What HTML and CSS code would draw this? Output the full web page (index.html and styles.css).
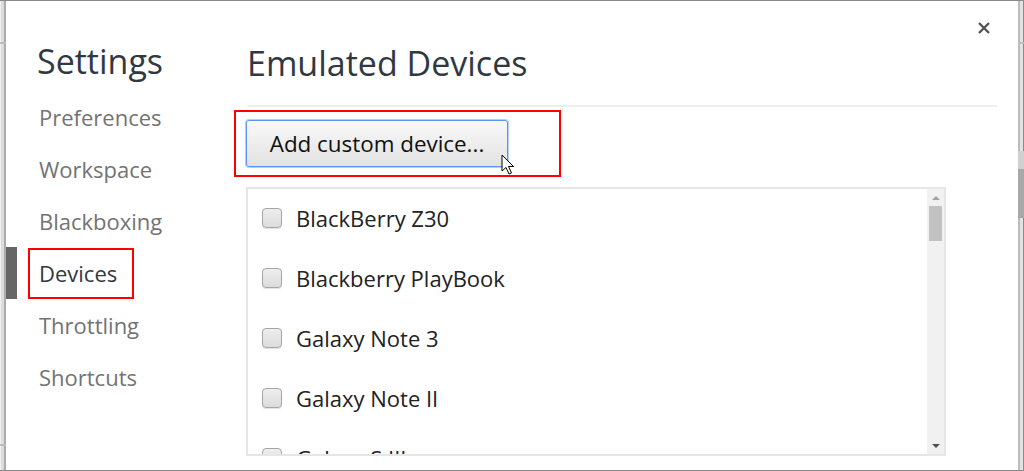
FILE: index.html
```html
<!DOCTYPE html>
<html lang="en">
<head>
    <meta charset="UTF-8">
    <title>Settings - Emulated Devices</title>
    <link rel="stylesheet" href="styles.css">
</head>
<body>
    <div class="frame">
        <div class="edge-left"></div>

        <div class="dialog">
            <!-- Close button -->
            <button class="close-btn" title="Close">
                <svg width="14" height="14" viewBox="0 0 14 14">
                    <path d="M2 2 L12 12 M12 2 L2 12" stroke="#555" stroke-width="2.4" fill="none"/>
                </svg>
            </button>

            <!-- Sidebar -->
            <div class="sidebar">
                <h1 class="sidebar-title">Settings</h1>
                <ul class="nav">
                    <li class="nav-item">Preferences</li>
                    <li class="nav-item">Workspace</li>
                    <li class="nav-item">Blackboxing</li>
                    <li class="nav-item selected"><span class="mark">Devices</span></li>
                    <li class="nav-item">Throttling</li>
                    <li class="nav-item">Shortcuts</li>
                </ul>
            </div>

            <!-- Main panel -->
            <div class="panel">
                <h2 class="panel-title">Emulated Devices</h2>

                <div class="mark-box">
                    <button class="add-btn">Add custom device...</button>
                    <svg class="cursor" width="14" height="22" viewBox="0 0 14 22">
                        <path d="M1 1 L1 17 L5 13.5 L8 20 L10.5 19 L7.5 12.5 L12.5 12.5 Z" fill="#fff" stroke="#000" stroke-width="1"/>
                    </svg>
                </div>

                <div class="device-list">
                    <div class="devices">
                        <label class="device"><span class="check"></span>BlackBerry Z30</label>
                        <label class="device"><span class="check"></span>Blackberry PlayBook</label>
                        <label class="device"><span class="check"></span>Galaxy Note 3</label>
                        <label class="device"><span class="check"></span>Galaxy Note II</label>
                        <label class="device"><span class="check"></span>Galaxy S III</label>
                    </div>
                    <div class="scrollbar">
                        <div class="arrow arrow-up"></div>
                        <div class="track"><div class="thumb"></div></div>
                        <div class="arrow arrow-down"></div>
                    </div>
                </div>
            </div>
        </div>

        <div class="edge-right"></div>
    </div>
</body>
</html>
```

FILE: styles.css
```css
/* General */
body {
    margin: 0;
    font-family: 'Open Sans', 'Noto Sans', sans-serif;
    background: #fff;
    overflow: hidden;
}

.frame {
    display: flex;
    width: 1024px;
    height: 471px;
    box-sizing: border-box;
    border-top: 1px solid #8a8a8a;
    border-bottom: 1px solid #8a8a8a;
}

/* Window edges */
.edge-left {
    width: 6px;
    background: linear-gradient(to bottom, transparent 41px, #bdbdbd 41px 43px, transparent 43px 443px, #bdbdbd 443px 445px, transparent 445px),
        linear-gradient(to right, #f2f2f2 1px, #dcdcdc 1px 4px, #ababab 4px 6px);
}

.edge-right {
    width: 6px;
    background: linear-gradient(to bottom, transparent 41px, #bdbdbd 41px 43px, transparent 43px 150px, #d0d0d0 150px 168px, #a8a8a8 168px 217px, transparent 217px),
        linear-gradient(to right, #bcbcbc 2px, #e2e2e2 2px 5px, #8a8a8a 5px);
}

.dialog {
    flex: 1;
    display: flex;
    position: relative;
    background: #fff;
}

.close-btn {
    position: absolute;
    top: 20px;
    right: 27px;
    width: 14px;
    height: 14px;
    padding: 0;
    border: none;
    background: none;
    cursor: pointer;
}
.close-btn svg { display: block; }

/* Sidebar */
.sidebar {
    width: 241px;
    padding-top: 40px;
}

.sidebar-title {
    margin: 0 0 10px 31px;
    font-size: 34px;
    font-weight: 400;
    line-height: 40px;
    color: #303942;
}

.nav {
    list-style: none;
    margin: 0;
    padding: 0;
}

.nav-item {
    height: 52px;
    line-height: 52px;
    padding-left: 33px;
    font-size: 22px;
    color: #737373;
}

.nav-item.selected {
    border-left: 11px solid #666;
    padding-left: 22px;
    color: #303942;
}

.mark {
    display: inline-block;
    line-height: 47px;
    margin-left: -11px;
    padding: 0 15px 0 9px;
    border: 2px solid #f00;
}

/* Main panel */
.panel {
    flex: 1;
    padding-top: 42px;
    padding-right: 21px;
}

.panel-title {
    margin: 0;
    padding-bottom: 22px;
    border-bottom: 2px solid #eee;
    font-size: 34px;
    font-weight: 400;
    line-height: 40px;
    color: #303942;
}

.mark-box {
    position: relative;
    width: 303px;
    margin: 3px 0 0 -13px;
    padding: 8px 10px;
    border: 2px solid #f00;
}

.add-btn {
    display: block;
    width: 262px;
    height: 47px;
    padding: 0;
    font-family: inherit;
    font-size: 22.4px;
    color: #111;
    background: linear-gradient(#f9f9f9, #e2e2e2);
    border: 1px solid #5a95ee;
    border-radius: 3px;
    box-shadow: 0 0 0 1px rgba(90, 149, 238, 0.45);
}

.cursor {
    position: absolute;
    left: 265px;
    top: 42px;
}

/* Device list */
.device-list {
    display: flex;
    width: 696px;
    height: 265px;
    margin: 10px 0 0 -1px;
    border: 2px solid #e6e6e6;
    overflow: hidden;
}

.devices {
    flex: 1;
    margin-top: -1px;
}

.device {
    display: flex;
    align-items: center;
    height: 60px;
    padding-left: 14px;
    font-size: 22px;
    color: #222;
}

.check {
    width: 18px;
    height: 18px;
    margin-right: 14px;
    border: 1.5px solid #a6a6a6;
    border-radius: 4px;
    background: linear-gradient(#ededed, #dcdcdc);
    box-shadow: 0 1px 1px rgba(0, 0, 0, 0.12);
}

.scrollbar {
    width: 17px;
    display: flex;
    flex-direction: column;
    background: #f1f1f1;
}

.arrow {
    height: 17px;
    display: flex;
    align-items: center;
    justify-content: center;
}

.arrow-up::after {
    content: '';
    border-left: 4px solid transparent;
    border-right: 4px solid transparent;
    border-bottom: 4px solid #a3a3a3;
}

.arrow-down::after {
    content: '';
    border-left: 4px solid transparent;
    border-right: 4px solid transparent;
    border-top: 4px solid #505050;
}

.track {
    flex: 1;
}

.thumb {
    height: 35px;
    margin: 0 2px;
    background: #c1c1c1;
}
```
